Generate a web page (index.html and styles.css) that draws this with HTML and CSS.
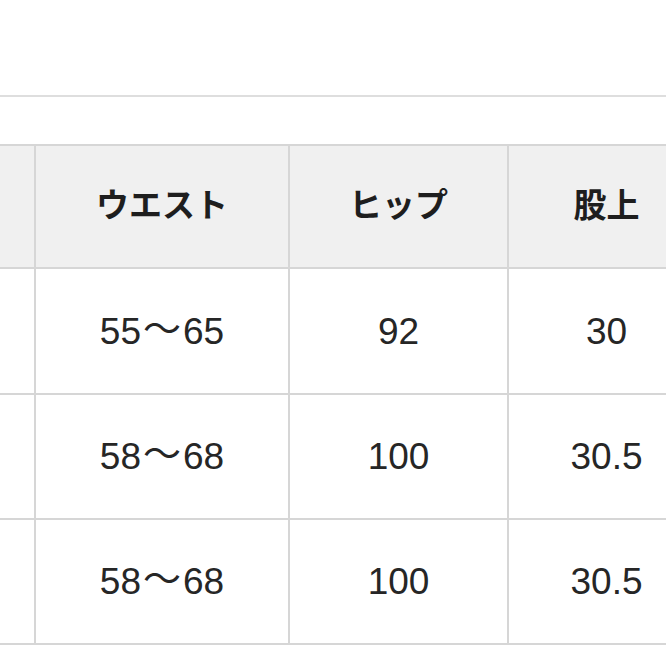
FILE: index.html
```html
<!DOCTYPE html>
<html lang="ja">
<head>
<meta charset="utf-8">
<link rel="stylesheet" href="styles.css">
</head>
<body>
<div class="topline"></div>
<table class="size-table">
  <colgroup>
    <col class="c0"><col class="c1"><col class="c2"><col class="c3">
  </colgroup>
  <thead>
    <tr><th></th><th>ウエスト</th><th>ヒップ</th><th>股上</th></tr>
  </thead>
  <tbody>
    <tr class="r1"><td></td><td>55<span class="wave">～</span>65</td><td>92</td><td>30</td></tr>
    <tr><td></td><td>58<span class="wave">～</span>68</td><td>100</td><td>30.5</td></tr>
    <tr><td></td><td>58<span class="wave">～</span>68</td><td>100</td><td>30.5</td></tr>
  </tbody>
</table>
</body>
</html>
```
FILE: styles.css
```css
html, body {
  margin: 0;
  padding: 0;
  background: #ffffff;
  overflow: hidden;
}
body {
  width: 666px;
  height: 666px;
  font-family: "Liberation Sans", "Noto Sans CJK JP", sans-serif;
  color: #262626;
}
.topline {
  margin-top: 95px;
  height: 2px;
  background: #dedede;
}
.size-table {
  margin-top: 47px;
  margin-left: -168px;
  border-collapse: collapse;
  table-layout: fixed;
  width: 872px;
}
.c0 { width: 202px; }
.c1 { width: 254px; }
.c2 { width: 219px; }
.c3 { width: 197px; }
.size-table th,
.size-table td {
  border: 2px solid #d6d6d6;
  text-align: center;
  vertical-align: middle;
  padding: 0;
  line-height: 1;
}
.size-table th {
  background: #f0f0f0;
  height: 115px;
  font-family: "Noto Sans CJK JP", sans-serif;
  font-weight: 700;
  font-size: 33px;
  color: #1e1e1e;
  padding-bottom: 6px;
}
.size-table td {
  font-size: 37px;
  height: 123px;
}
.size-table .r1 td {
  height: 124px;
}
.wave {
  font-family: "Noto Sans CJK JP", sans-serif;
  font-size: 38px;
  line-height: 0;
  margin: 0 2px;
  vertical-align: 2px;
}
```
